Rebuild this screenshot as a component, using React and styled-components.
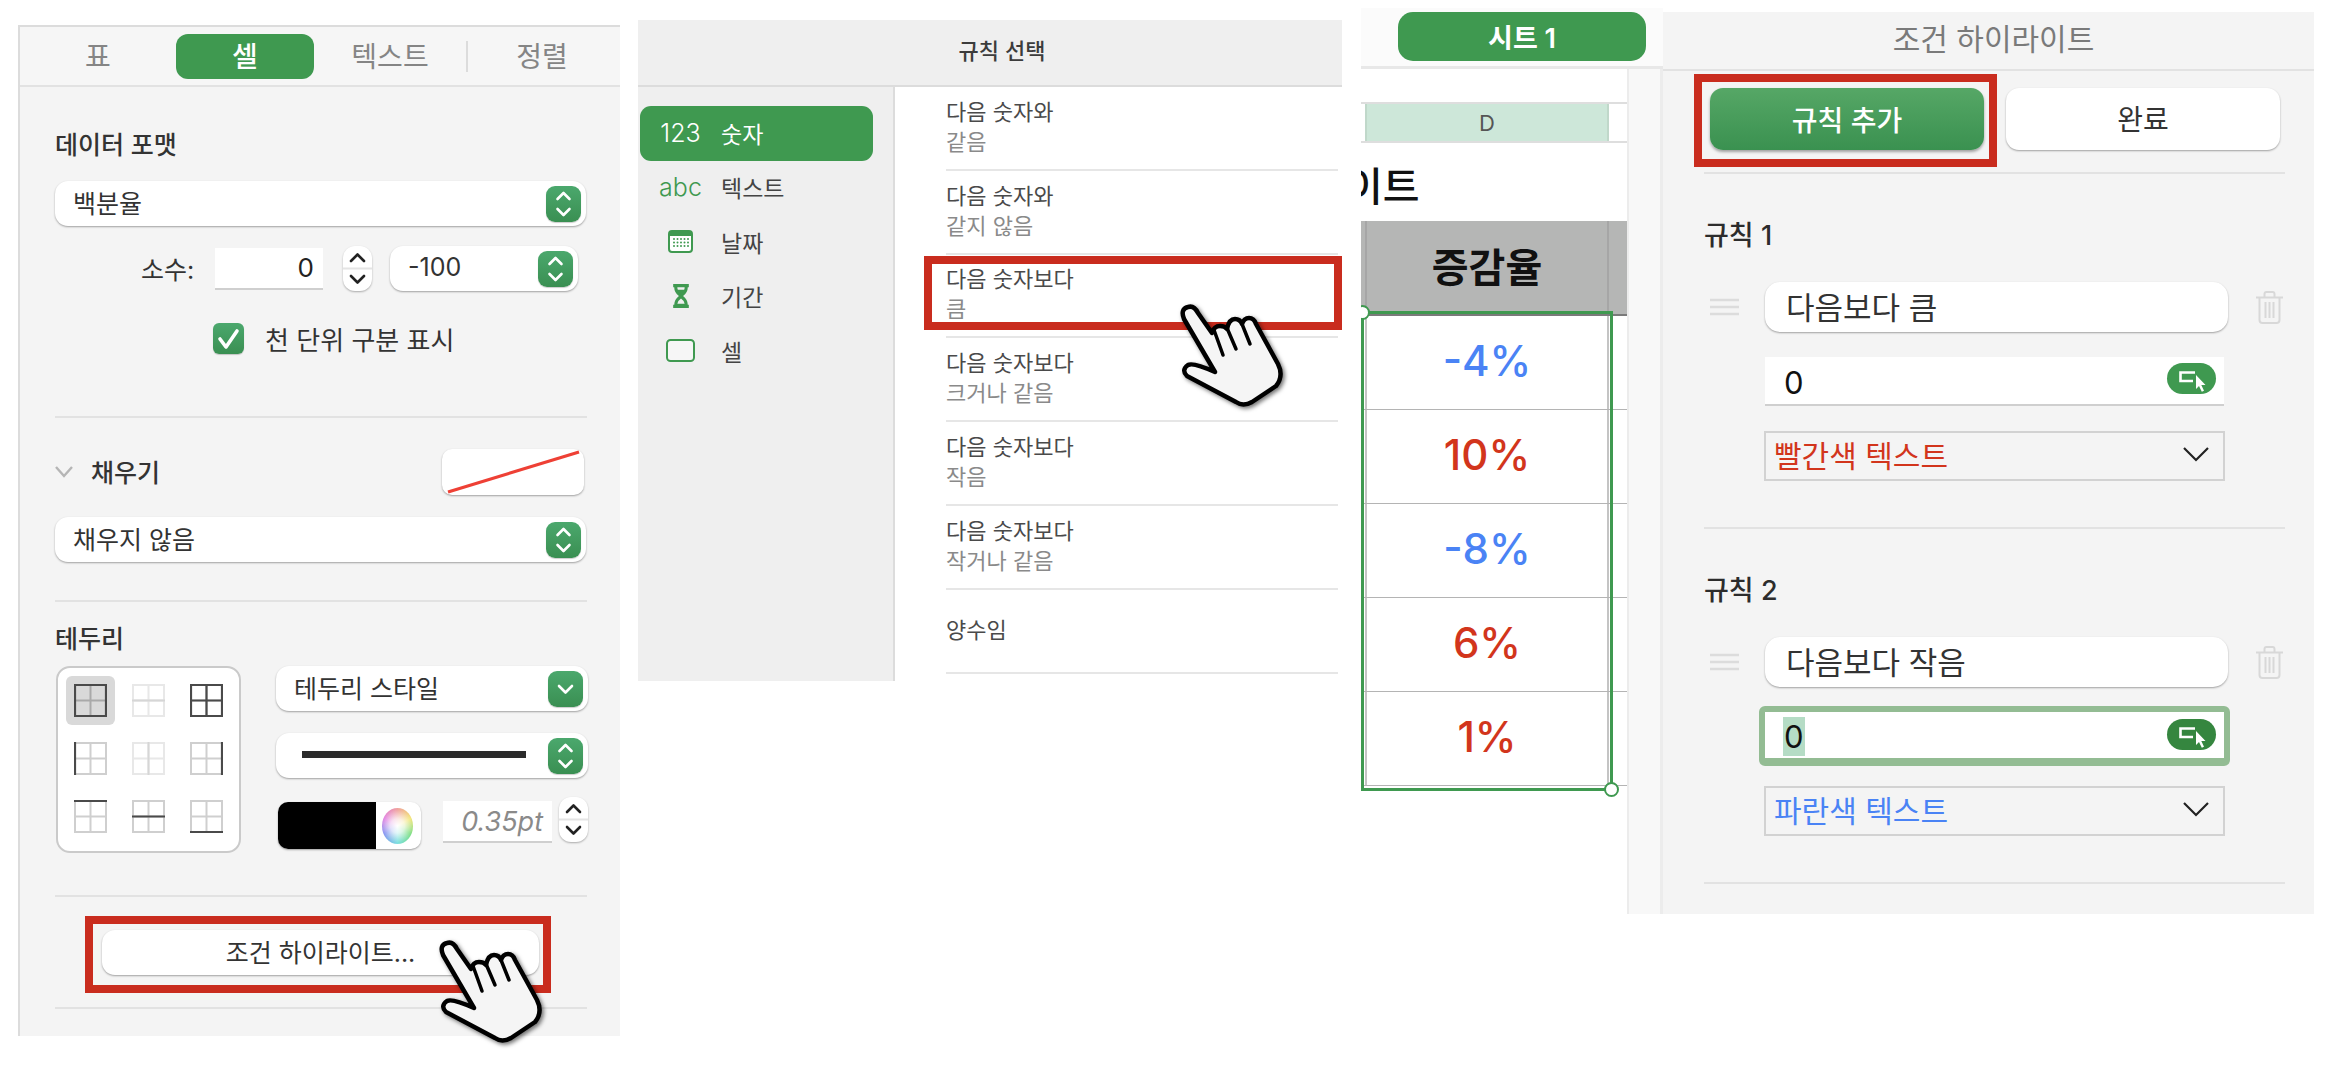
import React from 'react';
import styled, { createGlobalStyle } from 'styled-components';

const GlobalStyle = createGlobalStyle`
  html, body {
    margin: 0;
    padding: 0;
    background: #fff;
  }
  body {
    font-family: Inter, "Noto Sans CJK KR", sans-serif;
    color: #333;
    -webkit-font-smoothing: antialiased;
  }
  * {
    box-sizing: border-box;
  }
`;

const GREEN = '#3f9950';
const RED = '#c92c1e';
const BLUE = '#4a83f5';
const TEXT_RED = '#d2351c';
const LINE = '#e2e2e2';

const Page = styled.div`
  display: flex;
  align-items: flex-start;
  width: 2332px;
  height: 1078px;
  overflow: hidden;
  padding-left: 18px;
`;

/* ---------- shared bits ---------- */

const Rule = styled.div`
  height: 2px;
  background: ${LINE};
  margin-top: ${p => p.$top || 0}px;
`;

const RedBox = styled.div`
  position: absolute;
  inset: ${p => p.$inset};
  border: 8px solid ${RED};
  pointer-events: none;
`;

const HandSvg = styled.svg`
  position: absolute;
  left: ${p => p.$left}px;
  top: ${p => p.$top}px;
  width: 130px;
  height: 125px;
  z-index: 3;
  filter: drop-shadow(2px 2px 2px rgba(0, 0, 0, 0.55));
`;

const Hand = ({ left, top }) => (
  <HandSvg $left={left} $top={top} viewBox="0 0 130 125">
    <path
      d="M17 84 Q11 78 18 73 Q23 70 45 80 L14 27 Q10 17 18 15 Q24 13 28 21 L42 41 Q44 34 50 34 Q55 34 57 37 Q59 27 65 27 Q70 27 72 32 Q74 26 79 26 Q84 26 86 32 L108 72 Q114 84 106 94 L82 110 Q73 115 66 110 Z"
      fill="#f5f5f5"
      stroke="#000"
      strokeWidth="4.5"
      strokeLinejoin="round"
    />
    <path
      d="M44 38 L53 63 M57 36 L66 57 M72 32 L80 52"
      fill="none"
      stroke="#000"
      strokeWidth="3.5"
      strokeLinecap="round"
    />
  </HandSvg>
);

const StepBox = styled.span`
  flex: none;
  display: flex;
  width: 35px;
  height: 36px;
  margin-top: 3px;
  border-radius: 9px;
  background: linear-gradient(#4ba86d, #3a8f52);
  box-shadow: 0 1px 1px rgba(0, 0, 0, 0.2);
`;

const GreenStep = ({ single }) => (
  <StepBox>
    <svg width="35" height="36" viewBox="0 0 35 36" fill="none" stroke="#fff" strokeWidth="2.6" strokeLinecap="round" strokeLinejoin="round">
      {single ? <path d="M11 15 L17.5 21.5 L24 15" /> : <path d="M11.5 13 L17.5 7 L23.5 13 M11.5 23 L17.5 29 L23.5 23" />}
    </svg>
  </StepBox>
);

const Select = styled.div`
  display: flex;
  align-items: center;
  justify-content: space-between;
  flex: none;
  width: ${p => p.$width || 531}px;
  height: 45px;
  margin-top: ${p => p.$top || 0}px;
  margin-left: ${p => p.$left || 0}px;
  padding: 0 5px 3px ${p => p.$pad || 18}px;
  background: #fff;
  border-radius: 13px;
  box-shadow: 0 1px 2px rgba(0, 0, 0, 0.35);
  font-size: 25px;
  color: #333;
  white-space: nowrap;
`;

const WhiteStepBox = styled.div`
  flex: none;
  display: flex;
  width: 29px;
  height: 45px;
  margin-left: ${p => p.$left || 0}px;
  background: #fff;
  border-radius: 12px;
  box-shadow: 0 1px 2px rgba(0, 0, 0, 0.3);
`;

const WhiteStep = ({ left }) => (
  <WhiteStepBox $left={left}>
    <svg width="29" height="45" viewBox="0 0 29 45" fill="none" strokeLinecap="round" strokeLinejoin="round">
      <path d="M0 22.5 H29" stroke="#e4e4e4" strokeWidth="2" />
      <path d="M8 15 L14.5 8.5 L21 15 M8 30 L14.5 36.5 L21 30" stroke="#222" strokeWidth="2.6" />
    </svg>
  </WhiteStepBox>
);

/* ---------- inspector (left panel) ---------- */

const Inspector = styled.section`
  flex: none;
  width: 602px;
  height: 1011px;
  margin-top: 25px;
  background: #f4f4f4;
  border-top: 2px solid #dcdcdc;
  border-left: 2px solid #dcdcdc;
`;

const TabBar = styled.div`
  display: flex;
  align-items: center;
  height: 60px;
  background: #f6f6f6;
  border-bottom: 2px solid ${LINE};
`;

const Tab = styled.div`
  width: ${p => p.$width}px;
  height: 45px;
  padding-bottom: 2px;
  display: flex;
  align-items: center;
  justify-content: center;
  font-size: 28px;
  font-weight: ${p => (p.$active ? 500 : 400)};
  color: ${p => (p.$active ? '#fff' : '#858585')};
  background: ${p => (p.$active ? GREEN : 'transparent')};
  border-radius: 12px;
`;

const TabDivider = styled.div`
  width: 2px;
  height: 31px;
  margin: 0 -2px 0 0;
  background: #dcdcdc;
`;

const InspectorBody = styled.div`
  padding: 0 33px 0 35px;
`;

const SectionTitle = styled.div`
  margin-top: ${p => p.$top}px;
  font-size: 25px;
  font-weight: 500;
  line-height: 30px;
  color: #333;
`;

const DecimalRow = styled.div`
  display: flex;
  align-items: center;
  height: 45px;
  margin-top: 20px;
  padding-left: 86px;
`;

const DecimalLabel = styled.div`
  width: 74px;
  padding-bottom: 2px;
  font-size: 25px;
  color: #333;
`;

const NumberBox = styled.div`
  flex: none;
  width: ${p => p.$width}px;
  height: 42px;
  margin-left: ${p => p.$left || 0}px;
  margin-top: ${p => p.$shift || 0}px;
  padding-right: 9px;
  display: flex;
  align-items: center;
  justify-content: flex-end;
  background: #fff;
  border-bottom: 2px solid #cfcfcf;
  font-size: ${p => (p.$italic ? 27 : 26)}px;
  font-style: ${p => (p.$italic ? 'italic' : 'normal')};
  color: ${p => (p.$italic ? '#8a8a8a' : '#222')};
`;

const CheckRow = styled.div`
  display: flex;
  align-items: center;
  gap: 21px;
  height: 31px;
  margin-top: 32px;
  padding-left: 158px;
  font-size: 26px;
  color: #333;
`;

const CheckBox = styled.span`
  flex: none;
  display: flex;
  width: 31px;
  height: 31px;
  border-radius: 6px;
  background: linear-gradient(#4ba86d, #3a8f52);
  box-shadow: 0 1px 1px rgba(0, 0, 0, 0.2);
`;

const FillRow = styled.div`
  display: flex;
  align-items: center;
  height: 46px;
  margin-top: 31px;
`;

const FillLabel = styled.div`
  margin-left: 18px;
  padding-bottom: 2px;
  flex: 1;
  font-size: 25px;
  font-weight: 500;
  color: #333;
`;

const Swatch = styled.div`
  flex: none;
  width: 142px;
  height: 46px;
  margin-right: 3px;
  display: flex;
  background: #fff;
  border-radius: 10px;
  box-shadow: 0 1px 2px rgba(0, 0, 0, 0.35);
`;

const BorderRow = styled.div`
  display: flex;
  margin-top: 12px;
  margin-left: 1px;
`;

const BorderGrid = styled.div`
  flex: none;
  display: grid;
  grid-template-columns: repeat(3, 49px);
  grid-auto-rows: 49px;
  gap: 9px;
  width: 185px;
  height: 187px;
  padding: 8px;
  background: #fff;
  border: 2px solid #cacaca;
  border-radius: 14px;
`;

const BorderCell = styled.div`
  display: flex;
  align-items: center;
  justify-content: center;
  border-radius: 6px;
  background: ${p => (p.$active ? '#d9d9d9' : 'transparent')};
`;

const BorderColumn = styled.div`
  flex: none;
  width: 312px;
  margin-left: 35px;
`;

const StyleLine = styled.div`
  flex: none;
  width: 224px;
  height: 7px;
  margin-left: 8px;
  background: #2b2b2b;
`;

const ColorRow = styled.div`
  display: flex;
  align-items: flex-start;
  margin-top: 19px;
`;

const ColorWell = styled.div`
  flex: none;
  display: flex;
  width: 143px;
  height: 47px;
  margin-left: 2px;
  margin-top: 5px;
  background: #fff;
  border-radius: 10px;
  box-shadow: 0 1px 2px rgba(0, 0, 0, 0.35);
  overflow: hidden;
`;

const ColorBlack = styled.div`
  width: 98px;
  background: #000;
`;

const ColorWheel = styled.div`
  width: 31px;
  height: 36px;
  margin: 6px 0 0 6px;
  border-radius: 50%;
  background: radial-gradient(circle, #fff 0, rgba(255, 255, 255, 0.75) 30%, rgba(255, 255, 255, 0) 70%),
    conic-gradient(#f0a3a0, #f2e36f, #74dc7a, #7fe0e0, #7d8cf0, #e07be0, #f0a3a0);
`;

const ButtonSlot = styled.div`
  position: relative;
  width: ${p => p.$width}px;
  flex: none;
  margin-top: ${p => p.$top || 0}px;
  margin-left: ${p => p.$left || 0}px;
`;

const WhiteButton = styled.div`
  display: flex;
  align-items: center;
  justify-content: center;
  height: ${p => p.$height}px;
  padding-bottom: 3px;
  background: #fff;
  border-radius: 13px;
  box-shadow: 0 1px 2px rgba(0, 0, 0, 0.35);
  font-size: ${p => p.$size}px;
  color: #333;
`;

const BorderIcon = ({ kind }) => {
  const base = kind === 'faint' || kind === 'none' ? '#e8e8e8' : kind === 'outer' ? '#a9a9a9' : '#cfcfcf';
  const dark = '#4a4a4a';
  const seg = {
    left: 'M1 0 V33',
    right: 'M32 0 V33',
    top: 'M0 1 H33',
    bottom: 'M0 32 H33',
    midH: 'M0 16.5 H33',
    midV: 'M16.5 0 V33',
  };
  const darkSet = {
    outer: ['left', 'right', 'top', 'bottom'],
    all: ['left', 'right', 'top', 'bottom', 'midH', 'midV'],
    left: ['left'],
    right: ['right'],
    top: ['top'],
    midH: ['midH'],
    bottom: ['bottom'],
  }[kind] || [];
  return (
    <svg width="33" height="33" viewBox="0 0 33 33" fill="none">
      <path d="M1 1 H32 V32 H1 Z M16.5 0 V33 M0 16.5 H33" stroke={base} strokeWidth="2" />
      {kind === 'none' && <path d="M16.5 0 V33" stroke="#d6d6d6" strokeWidth="2" />}
      {kind === 'faint' && <path d="M0 16.5 H33" stroke="#d6d6d6" strokeWidth="2" />}
      {darkSet.map(k => (
        <path key={k} d={seg[k]} stroke={dark} strokeWidth="2.2" />
      ))}
    </svg>
  );
};

const borderKinds = ['outer', 'faint', 'all', 'left', 'none', 'right', 'top', 'midH', 'bottom'];

const InspectorPanel = () => (
  <Inspector>
    <TabBar>
      <Tab $width={156}>표</Tab>
      <Tab $width={138} $active>셀</Tab>
      <Tab $width={152}>텍스트</Tab>
      <TabDivider />
      <Tab $width={152}>정렬</Tab>
    </TabBar>
    <InspectorBody>
      <SectionTitle $top={43}>데이터 포맷</SectionTitle>
      <Select $top={21}>
        백분율
        <GreenStep />
      </Select>
      <DecimalRow>
        <DecimalLabel>소수:</DecimalLabel>
        <NumberBox $width={108}>0</NumberBox>
        <WhiteStep left={20} />
        <Select $width={188} $pad={18} $left={18}>
          -100
          <GreenStep />
        </Select>
      </DecimalRow>
      <CheckRow>
        <CheckBox>
          <svg width="31" height="31" viewBox="0 0 31 31" fill="none" stroke="#fff" strokeWidth="3.6" strokeLinecap="round" strokeLinejoin="round">
            <path d="M7 16 L13 24 L24 8" />
          </svg>
        </CheckBox>
        천 단위 구분 표시
      </CheckRow>
      <Rule $top={62} />

      <FillRow>
        <svg width="18" height="12" viewBox="0 0 18 12" fill="none" stroke="#b5b5b5" strokeWidth="2.4">
          <path d="M1 1 L9 10 L17 1" />
        </svg>
        <FillLabel>채우기</FillLabel>
        <Swatch>
          <svg width="142" height="46" viewBox="0 0 142 46">
            <path d="M6 43 L137 3" stroke="#ee4035" strokeWidth="3.2" />
          </svg>
        </Swatch>
      </FillRow>
      <Select $top={22}>
        채우지 않음
        <GreenStep />
      </Select>
      <Rule $top={38} />

      <SectionTitle $top={22}>테두리</SectionTitle>
      <BorderRow>
        <BorderGrid>
          {borderKinds.map((kind, i) => (
            <BorderCell key={i} $active={i === 0}>
              <BorderIcon kind={kind} />
            </BorderCell>
          ))}
        </BorderGrid>
        <BorderColumn>
          <Select $width={312}>
            테두리 스타일
            <GreenStep single />
          </Select>
          <Select $width={312} $top={22}>
            <StyleLine />
            <GreenStep />
          </Select>
          <ColorRow>
            <ColorWell>
              <ColorBlack />
              <ColorWheel />
            </ColorWell>
            <NumberBox $width={109} $left={22} $shift={4} $italic>0.35pt</NumberBox>
            <WhiteStep left={7} />
          </ColorRow>
        </BorderColumn>
      </BorderRow>
      <Rule $top={42} />

      <ButtonSlot $width={437} $left={47} $top={33}>
        <WhiteButton $height={45} $size={25}>조건 하이라이트...</WhiteButton>
        <RedBox $inset="-14px -12px -18px -17px" />
        <Hand left={327} top={-2} />
      </ButtonSlot>
      <Rule $top={32} />
    </InspectorBody>
  </Inspector>
);

/* ---------- rule picker ---------- */

const Picker = styled.section`
  flex: none;
  width: 704px;
  height: 661px;
  margin-top: 20px;
  margin-left: 18px;
`;

const PickerHead = styled.div`
  display: flex;
  align-items: center;
  justify-content: center;
  height: 67px;
  padding: 0 0 8px 24px;
  background: #efefef;
  border-bottom: 2px solid #dcdcdc;
  font-size: 22px;
  font-weight: 500;
  color: #3c3c3c;
`;

const PickerBody = styled.div`
  display: flex;
  height: 594px;
`;

const CategoryList = styled.div`
  flex: none;
  width: 257px;
  padding: 19px 20px 0 2px;
  background: #efefef;
  border-right: 2px solid #dcdcdc;
`;

const Category = styled.div`
  display: flex;
  align-items: center;
  height: ${p => (p.$active ? 55 : 54.5)}px;
  padding-bottom: 2px;
  border-radius: 11px;
  background: ${p => (p.$active ? GREEN : 'transparent')};
  color: ${p => (p.$active ? '#fff' : '#444')};
  font-size: 23px;
`;

const CategoryIcon = styled.div`
  flex: none;
  width: 81px;
  display: flex;
  justify-content: center;
  font-size: 25px;
  font-weight: 300;
  color: ${p => (p.$active ? '#fff' : GREEN)};
`;

const RuleList = styled.div`
  flex: 1;
  padding: 0 4px 0 51px;
  background: #fff;
`;

const RuleOption = styled.div`
  position: relative;
  display: flex;
  flex-direction: column;
  justify-content: center;
  height: 83.8px;
  padding-bottom: 2px;
  border-bottom: 2px solid #e6e6e6;
  font-size: 22px;
  line-height: 30px;
  color: #4a4a4a;
`;

const RuleSub = styled.div`
  color: #8a8a8a;
`;

const categories = [
  { icon: '123', label: '숫자', active: true },
  { icon: 'abc', label: '텍스트' },
  {
    icon: (
      <svg width="25" height="23" viewBox="0 0 25 23">
        <rect x="1" y="1" width="23" height="21" rx="3" fill="#fff" stroke={GREEN} strokeWidth="2" />
        <path d="M1 4 Q1 1 4 1 H21 Q24 1 24 4 V6 H1 Z" fill={GREEN} />
        {[9, 12.5, 16].map(y =>
          [6, 9.5, 13, 16.5, 20].map(x => <circle key={`${x}-${y}`} cx={x} cy={y} r="1" fill={GREEN} />)
        )}
      </svg>
    ),
    label: '날짜',
  },
  {
    icon: (
      <svg width="16" height="24" viewBox="0 0 15 23">
        <path d="M0 0 H15 V3 H14 Q14 8 9.5 11.5 Q14 15 14 20 H15 V23 H0 V20 H1 Q1 15 5.5 11.5 Q1 8 1 3 H0 Z" fill={GREEN} />
        <path d="M4 3 H11 Q11 4.5 10.5 5.5 H4.5 Q4 4.5 4 3 Z M7.5 14 Q4.5 16 4 19 H11 Q10.5 16 7.5 14 Z" fill="#efefef" />
      </svg>
    ),
    label: '기간',
  },
  {
    icon: (
      <svg width="29" height="23" viewBox="0 0 29 23">
        <rect x="1" y="1" width="27" height="21" rx="3.5" fill="#f6f6f6" stroke={GREEN} strokeWidth="2" />
      </svg>
    ),
    label: '셀',
  },
];

const options = [
  ['다음 숫자와', '같음'],
  ['다음 숫자와', '같지 않음'],
  ['다음 숫자보다', '큼'],
  ['다음 숫자보다', '크거나 같음'],
  ['다음 숫자보다', '작음'],
  ['다음 숫자보다', '작거나 같음'],
  ['양수임'],
];

const PickerPanel = () => (
  <Picker>
    <PickerHead>규칙 선택</PickerHead>
    <PickerBody>
      <CategoryList>
        {categories.map(c => (
          <Category key={c.label} $active={c.active}>
            <CategoryIcon $active={c.active}>{c.icon}</CategoryIcon>
            {c.label}
          </Category>
        ))}
      </CategoryList>
      <RuleList>
        {options.map(([a, b], i) => (
          <RuleOption key={i}>
            <div>{a}</div>
            {b && <RuleSub>{b}</RuleSub>}
            {i === 2 && (
              <>
                <RedBox $inset="1px -4px 6px -22px" />
                <Hand left={224} top={37} />
              </>
            )}
          </RuleOption>
        ))}
      </RuleList>
    </PickerBody>
  </Picker>
);

/* ---------- sheet ---------- */

const Sheet = styled.section`
  flex: none;
  width: 302px;
  margin-top: 8px;
  margin-left: 19px;
`;

const SheetTabs = styled.div`
  display: flex;
  align-items: flex-start;
  height: 61px;
  padding: 4px 0 0 37px;
  background: #fbfbfb;
  border-bottom: 3px solid #e8e8e8;
`;

const SheetTab = styled.div`
  width: 248px;
  height: 49px;
  display: flex;
  align-items: center;
  justify-content: center;
  background: ${GREEN};
  border-radius: 15px;
  color: #fff;
  font-size: 27px;
  font-weight: 600;
`;

const SheetBody = styled.div`
  display: flex;
  height: 845px;
`;

/* clips the selection's left handle at the column edge, as in the app */
const SheetGrid = styled.div`
  position: relative;
  flex: none;
  width: 266px;
  padding-top: 33px;
  background: #fff;
  overflow: hidden;
`;

const ScrollStrip = styled.div`
  flex: 1;
  background: #f8f8f8;
  border-left: 2px solid #ececec;
  border-right: 3px solid #ececec;
`;

const ColumnHead = styled.div`
  display: grid;
  grid-template-columns: 4px 244px 18px;
  height: 41px;
  border-top: 2px solid #dedede;
  border-bottom: 2px solid #dedede;
`;

const ColumnD = styled.div`
  grid-column: 2;
  display: flex;
  align-items: center;
  justify-content: center;
  background: #cde7d9;
  border-left: 2px solid #c0d8ca;
  border-right: 2px solid #c0d8ca;
  font-size: 22px;
  color: #555;
`;

const SheetTitle = styled.div`
  height: 78px;
  width: 66px;
  overflow: hidden;
  font-size: 40px;
  font-weight: 500;
  line-height: 88px;
  color: #111;
  white-space: nowrap;
`;

const SheetTitleText = styled.span`
  display: block;
  margin-left: -15px;
`;

const HeadRow = styled.div`
  display: grid;
  grid-template-columns: 4px 244px 18px;
  height: 95px;
  background: #b5b6b5;
  border-bottom: 2px solid #7a7a7a;
`;

const HeadCell = styled.div`
  grid-column: 2;
  display: flex;
  align-items: center;
  justify-content: center;
  padding-bottom: 6px;
  border-left: 2px solid #a6a6a6;
  border-right: 2px solid #a6a6a6;
  font-size: 40px;
  font-weight: 600;
  color: #111;
`;

const DataRow = styled.div`
  display: grid;
  grid-template-columns: 4px 244px 18px;
  height: 94px;
  border-bottom: 1px solid #b4b4b4;
`;

const DataCell = styled.div`
  grid-column: 2;
  display: flex;
  align-items: center;
  justify-content: center;
  padding-bottom: 4px;
  border-left: 2px solid #c4c4c4;
  border-right: 2px solid #c4c4c4;
  font-size: 42px;
  font-weight: 500;
  color: ${p => (p.$up ? TEXT_RED : BLUE)};
`;

const Selection = styled.div`
  position: absolute;
  left: 0;
  top: 242px;
  width: 252px;
  height: 480px;
  border: 3px solid ${GREEN};
  pointer-events: none;
`;

const SelectionHandle = styled.span`
  position: absolute;
  width: 15px;
  height: 15px;
  border-radius: 50%;
  background: #fff;
  border: 2.5px solid ${GREEN};
  ${p => (p.$end ? 'right: -9px; bottom: -9px;' : 'left: -9px; top: -9px;')}
`;

const cells = [
  ['-4%', false],
  ['10%', true],
  ['-8%', false],
  ['6%', true],
  ['1%', true],
];

const SheetPanel = () => (
  <Sheet>
    <SheetTabs>
      <SheetTab>시트 1</SheetTab>
    </SheetTabs>
    <SheetBody>
      <SheetGrid>
        <ColumnHead>
          <ColumnD>D</ColumnD>
        </ColumnHead>
        <SheetTitle>
          <SheetTitleText>이트</SheetTitleText>
        </SheetTitle>
        <HeadRow>
          <HeadCell>증감율</HeadCell>
        </HeadRow>
        {cells.map(([v, up]) => (
          <DataRow key={v}>
            <DataCell $up={up}>{v}</DataCell>
          </DataRow>
        ))}
        <Selection>
          <SelectionHandle />
          <SelectionHandle $end />
        </Selection>
      </SheetGrid>
      <ScrollStrip />
    </SheetBody>
  </Sheet>
);

/* ---------- conditional highlight panel ---------- */

const Highlight = styled.section`
  flex: none;
  width: 651px;
  height: 902px;
  margin-top: 12px;
  background: #f4f4f4;
`;

const HighlightHead = styled.div`
  display: flex;
  align-items: center;
  justify-content: center;
  height: 59px;
  padding: 0 0 8px 10px;
  border-bottom: 2px solid ${LINE};
  font-size: 30px;
  color: #7a7a7a;
`;

const HighlightBody = styled.div`
  padding: 0 29px 0 41px;
`;

const ButtonRow = styled.div`
  display: flex;
  gap: 22px;
  margin-top: 17px;
  margin-left: 6px;
`;

const GreenButton = styled.div`
  display: flex;
  align-items: center;
  justify-content: center;
  height: 62px;
  background: linear-gradient(#56a766, #3a9150);
  border-radius: 13px;
  box-shadow: 0 2px 3px rgba(0, 0, 0, 0.35);
  font-size: 28px;
  font-weight: 500;
  color: #fff;
`;

const RuleTitle = styled.div`
  margin-top: 46px;
  font-size: 27px;
  font-weight: 500;
  line-height: 32px;
  color: #2c2c2c;
`;

const RuleField = styled.div`
  display: flex;
  align-items: center;
  margin-top: 30px;
  margin-left: 6px;
`;

const RuleName = styled.div`
  flex: none;
  display: flex;
  align-items: center;
  width: 463px;
  height: 50px;
  margin: 0 28px 0 26px;
  padding: 0 0 3px 21px;
  background: #fff;
  border-radius: 15px;
  box-shadow: 0 1px 2px rgba(0, 0, 0, 0.35);
  font-size: 31px;
  color: #333;
`;

const ValueInput = styled.div`
  display: flex;
  align-items: center;
  justify-content: space-between;
  width: ${p => (p.$focus ? 471 : 459)}px;
  height: ${p => (p.$focus ? 60 : 49)}px;
  margin-top: ${p => (p.$focus ? 19 : 25)}px;
  margin-left: ${p => (p.$focus ? 55 : 61)}px;
  padding: ${p => (p.$focus ? '0 8px 2px 18px' : '0 8px 0 18px')};
  background: #fff;
  border: ${p => (p.$focus ? '6px solid #93bc93' : 'none')};
  border-bottom: ${p => (p.$focus ? '8px solid #93bc93' : '2px solid #cfcfcf')};
  border-radius: ${p => (p.$focus ? 6 : 0)}px;
  font-size: 31px;
  color: #111;
`;

const ZeroText = styled.span`
  display: block;
  height: 39px;
  margin-top: 4px;
  padding: 0 1px;
  line-height: 39px;
  background: ${p => (p.$selected ? '#b5dcc5' : 'transparent')};
`;

const PickPill = styled.span`
  flex: none;
  display: flex;
  width: 49px;
  height: 31px;
  margin-top: ${p => (p.$focus ? 0 : -4)}px;
  border-radius: 16px;
  background: ${p => (p.$focus ? '#35863f' : GREEN)};
`;

const PickIcon = () => (
  <svg width="49" height="31" viewBox="0 0 49 31" fill="none">
    <path d="M28 9.5 H13.5 V18 H26" stroke="#fff" strokeWidth="2.6" />
    <path d="M29 12 V26 L32 23 L34.8 28.8 L37 27.8 L34.3 22 H38.5 Z" fill="#fff" />
  </svg>
);

const StyleSelect = styled.div`
  display: flex;
  align-items: center;
  justify-content: space-between;
  width: 461px;
  height: 50px;
  margin-top: ${p => (p.$tight ? 20 : 25)}px;
  margin-left: 60px;
  padding: 0 14px 4px 8px;
  border: 2.5px solid #d2d2d2;
  font-size: 30px;
  color: ${p => p.$color};
`;

const ruleItems = [
  { title: '규칙 1', name: '다음보다 큼', style: '빨간색 텍스트', color: TEXT_RED },
  { title: '규칙 2', name: '다음보다 작음', style: '파란색 텍스트', color: BLUE, focus: true },
];

const HighlightPanel = () => (
  <Highlight>
    <HighlightHead>조건 하이라이트</HighlightHead>
    <HighlightBody>
      <ButtonRow>
        <ButtonSlot $width={274}>
          <GreenButton>규칙 추가</GreenButton>
          <RedBox $inset="-14px -13px -17px -16px" />
        </ButtonSlot>
        <ButtonSlot $width={274}>
          <WhiteButton $height={62} $size={28}>완료</WhiteButton>
        </ButtonSlot>
      </ButtonRow>
      <Rule $top={22} />
      {ruleItems.map(r => (
        <div key={r.title}>
          <RuleTitle>{r.title}</RuleTitle>
          <RuleField>
            <svg width="29" height="18" viewBox="0 0 29 18" stroke="#dcdcdc" strokeWidth="2.4">
              <path d="M0 2 H29 M0 9 H29 M0 16 H29" />
            </svg>
            <RuleName>{r.name}</RuleName>
            <svg width="27" height="33" viewBox="0 0 27 33" fill="none" stroke="#d8d8d8" strokeWidth="2">
              <path d="M0 6.5 H27 M8.5 6 V3 Q8.5 1 10.5 1 H16.5 Q18.5 1 18.5 3 V6 M3.5 7 V29 Q3.5 32 6.5 32 H20.5 Q23.5 32 23.5 29 V7 M9.5 11 V27 M13.5 11 V27 M17.5 11 V27" />
            </svg>
          </RuleField>
          <ValueInput $focus={r.focus}>
            <ZeroText $selected={r.focus}>0</ZeroText>
            <PickPill $focus={r.focus}>
              <PickIcon />
            </PickPill>
          </ValueInput>
          <StyleSelect $color={r.color} $tight={r.focus}>
            {r.style}
            <svg width="26" height="15" viewBox="0 0 26 15" fill="none" stroke="#222" strokeWidth="2.2">
              <path d="M1 1 L13 13 L25 1" />
            </svg>
          </StyleSelect>
          <Rule $top={46} />
        </div>
      ))}
    </HighlightBody>
  </Highlight>
);

export default function App() {
  return (
    <Page>
      <GlobalStyle />
      <InspectorPanel />
      <PickerPanel />
      <SheetPanel />
      <HighlightPanel />
    </Page>
  );
}
